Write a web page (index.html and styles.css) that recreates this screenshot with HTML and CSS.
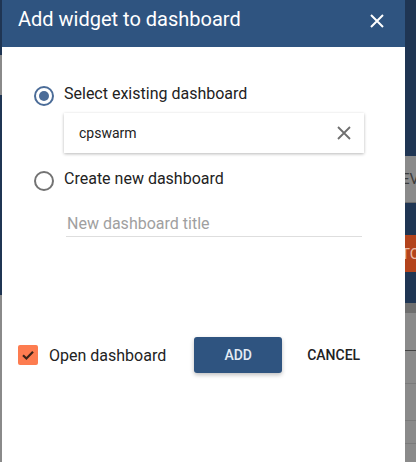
FILE: index.html
```html
<!DOCTYPE html>
<html>
<head>
<meta charset="utf-8">
<link rel="stylesheet" href="styles.css">
</head>
<body>
<div class="page">
  <div class="bg-strip left">
    <div class="band navy" style="height:55px"></div>
    <div class="band grey" style="height:40px"></div>
    <div class="band navy" style="height:200px"></div>
    <div class="band grey" style="height:167px"></div>
  </div>
  <div class="dialog">
    <div class="dlg-header">
      <div class="dlg-title">Add widget to dashboard</div>
      <svg class="dlg-close" width="14" height="14" viewBox="0 0 14 14"><path d="M1 1L13 13M13 1L1 13" stroke="#fff" stroke-width="2" fill="none"/></svg>
    </div>
    <div class="dlg-body">
      <div class="radio-row">
        <span class="radio checked"><span class="dot"></span></span>
        <span class="radio-label">Select existing dashboard</span>
      </div>
      <div class="select-card">
        <span class="select-value">cpswarm</span>
        <svg class="clear" width="14" height="14" viewBox="0 0 14 14"><path d="M1 1L13 13M13 1L1 13" stroke="#6f6f6f" stroke-width="1.8" fill="none"/></svg>
      </div>
      <div class="radio-row second">
        <span class="radio"></span>
        <span class="radio-label">Create new dashboard</span>
      </div>
      <div class="text-input">New dashboard title</div>
      <div class="dlg-footer">
        <span class="checkbox"><svg width="20" height="20" viewBox="0 0 20 20"><path d="M5 10.2L8.4 13.5L15 6.8" stroke="#3b2418" stroke-width="2.2" fill="none"/></svg></span>
        <span class="check-label">Open dashboard</span>
        <span class="btn btn-primary">ADD</span>
        <span class="btn btn-flat">CANCEL</span>
      </div>
    </div>
  </div>
  <div class="bg-strip right">
    <div class="band navy" style="height:156px"></div>
    <div class="band grey text-band" style="height:47px"><span>EV</span></div>
    <div class="band navy" style="height:32px"></div>
    <div class="band orange" style="height:37px"><span>TO</span></div>
    <div class="band navy" style="height:31px"></div>
    <div class="band darkgrey" style="height:10px"></div>
    <div class="band grey lined" style="height:149px"></div>
  </div>
</div>
</body>
</html>
```
FILE: styles.css
```css
html, body {
  margin: 0;
  padding: 0;
}
body {
  font-family: Roboto, "Liberation Sans", sans-serif;
  width: 416px;
  height: 462px;
  overflow: hidden;
}
.page {
  display: flex;
  height: 462px;
}
.bg-strip {
  display: flex;
  flex-direction: column;
  overflow: hidden;
}
.bg-strip.left { width: 2px; }
.bg-strip.right { width: 11px; }
.band { flex: none; position: relative; overflow: hidden; }
.band span {
  position: absolute;
  left: -4px;
  top: 50%;
  transform: translateY(-50%);
  font-size: 15px;
  white-space: nowrap;
}
.navy { background: #1f3553; }
.grey { background: #8a8a8a; }
.grey span { color: #3c3c3c; }
.text-band { border-bottom: 1px solid #6c6c6c; box-sizing: border-box; }
.orange { background: #b3431c; }
.orange span { color: #e8b8a6; }
.darkgrey { background: #6e6e6e; }
.lined {
  background:
    linear-gradient(#444, #444) 0 37px / 100% 1px no-repeat,
    linear-gradient(#7a7a7a, #7a7a7a) 0 70px / 100% 1px no-repeat,
    linear-gradient(#7a7a7a, #7a7a7a) 0 107px / 100% 1px no-repeat,
    linear-gradient(#7a7a7a, #7a7a7a) 0 130px / 100% 1px no-repeat,
    #8a8a8a;
}
.dialog {
  width: 403px;
  background: #fff;
  display: flex;
  flex-direction: column;
}
.dlg-header {
  height: 47px;
  box-sizing: border-box;
  background: #2f5480;
  display: flex;
  align-items: flex-start;
  justify-content: space-between;
  padding: 7px 21px 0 16px;
}
.dlg-title {
  color: #fff;
  font-size: 20px;
  line-height: 24px;
}
.dlg-close {
  margin-top: 7px;
}
.dlg-body {
  padding: 39px 0 0 0;
  display: flex;
  flex-direction: column;
}
.radio-row {
  display: flex;
  align-items: center;
  height: 20px;
  margin-left: 32px;
}
.radio-row.second {
  margin-top: 18px;
}
.radio {
  width: 20px;
  height: 20px;
  box-sizing: border-box;
  border: 2px solid #737373;
  border-radius: 50%;
  display: flex;
  align-items: center;
  justify-content: center;
}
.radio.checked {
  border-color: #4b6c98;
}
.radio .dot {
  width: 10px;
  height: 10px;
  border-radius: 50%;
  background: #4b6c98;
}
.radio-label {
  margin-left: 10px;
  font-size: 16px;
  color: #222;
  line-height: 20px;
  position: relative;
  top: -2px;
}
.select-card {
  margin: 7px 0 0 62px;
  width: 300px;
  height: 40px;
  box-sizing: border-box;
  background: #fff;
  box-shadow: 0 1px 3px rgba(0,0,0,0.28);
  display: flex;
  align-items: center;
  justify-content: space-between;
  padding: 0 13px 0 15px;
}
.select-value {
  font-size: 14px;
  color: #222;
}
.text-input {
  margin: 20px 0 0 64px;
  width: 296px;
  height: 26px;
  box-sizing: border-box;
  border-bottom: 1px solid #dedede;
  padding-left: 1px;
  font-size: 16px;
  line-height: 26px;
  color: #a0a0a0;
}
.dlg-footer {
  margin-top: 100px;
  display: flex;
  align-items: center;
  height: 36px;
  padding-left: 16px;
}
.checkbox {
  width: 20px;
  height: 20px;
  border-radius: 2px;
  background: #fd7c50;
  display: flex;
}
.check-label {
  margin-left: 11px;
  font-size: 16px;
  color: #222;
}
.btn {
  font-size: 14px;
  font-weight: 500;
  height: 36px;
  line-height: 36px;
  box-sizing: border-box;
}
.btn-primary {
  margin-left: 28px;
  width: 88px;
  text-align: center;
  background: #2f5480;
  color: #e3ebf5;
  border-radius: 3px;
  box-shadow: 0 2px 4px rgba(0,0,0,0.25);
}
.btn-flat {
  margin-left: 25px;
  color: #222;
}
```
